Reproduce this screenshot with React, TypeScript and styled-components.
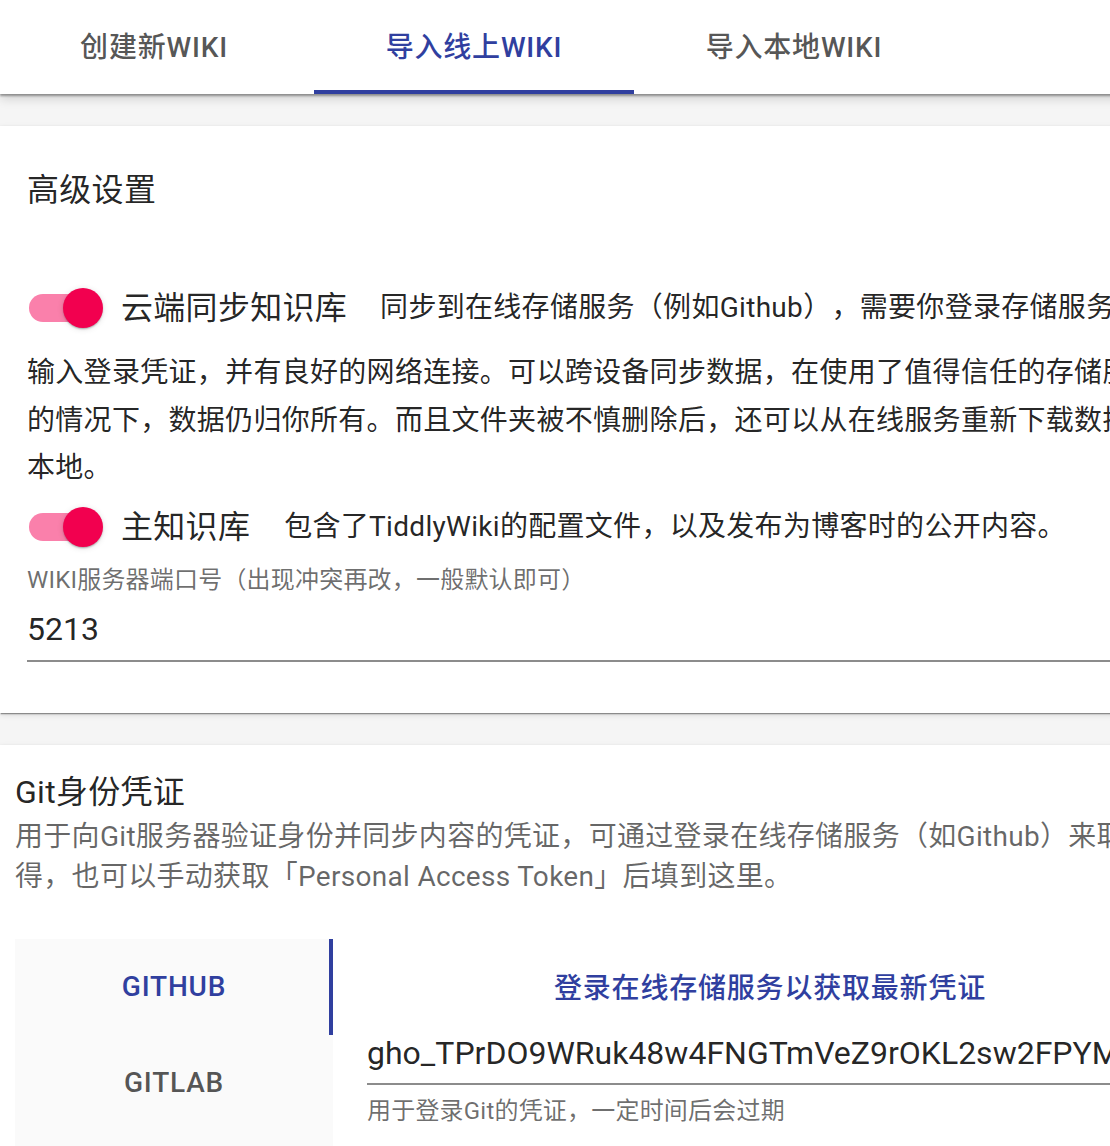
import React from "react";
import styled, { createGlobalStyle } from "styled-components";

const PRIMARY = "#303f9f";
const FONT = `Roboto, "Noto Sans CJK SC", "Noto Sans", sans-serif`;

const GlobalStyle = createGlobalStyle`
  html, body {
    margin: 0;
    padding: 0;
    background: #f5f5f5;
    overflow: hidden;
  }
  body {
    font-family: ${FONT};
    -webkit-font-smoothing: antialiased;
    text-spacing-trim: space-all;
  }
`;

const Page = styled.div`
  width: 1230px;
  display: flex;
  flex-direction: column;
`;

const TabBar = styled.nav`
  height: 94px;
  background: #fff;
  display: flex;
  position: relative;
  z-index: 2;
  box-shadow: 0 2px 2px rgba(0, 0, 0, 0.35), 0 5px 10px rgba(0, 0, 0, 0.14);
`;

const TabList = styled.div`
  display: flex;
  margin-left: -6px;
  height: 100%;
`;

const Tab = styled.div<{ $active?: boolean }>`
  width: 320px;
  box-sizing: border-box;
  display: flex;
  align-items: center;
  justify-content: center;
  font-size: 28px;
  font-weight: 500;
  letter-spacing: 0.8px;
  color: ${(p) => (p.$active ? PRIMARY : "rgba(0,0,0,0.68)")};
  border-bottom: 4px solid ${(p) => (p.$active ? PRIMARY : "transparent")};
`;

const Content = styled.main`
  display: flex;
  flex-direction: column;
  gap: 32px;
  padding-top: 32px;
`;

const Card = styled.section<{ $pad: string }>`
  background: #fff;
  padding: ${(p) => p.$pad};
  box-shadow: 0 2px 1px -1px rgba(0, 0, 0, 0.3), 0 1px 2px rgba(0, 0, 0, 0.18),
    0 2px 6px rgba(0, 0, 0, 0.1);
  display: flex;
  flex-direction: column;
`;

const Heading = styled.h2<{ $mb?: number }>`
  margin: 0 0 ${(p) => p.$mb ?? 0}px;
  font-size: 32px;
  line-height: 48px;
  font-weight: 400;
  letter-spacing: 0.3px;
  color: rgba(0, 0, 0, 0.87);
`;

const SwitchRow = styled.div<{ $mt?: number }>`
  display: flex;
  align-items: center;
  margin-left: -22px;
  margin-top: ${(p) => p.$mt ?? 0}px;
  white-space: nowrap;
`;

const SwitchRoot = styled.span`
  width: 116px;
  height: 76px;
  box-sizing: border-box;
  padding: 24px;
  display: inline-flex;
  align-items: center;
  flex-shrink: 0;
`;

const Track = styled.span`
  width: 68px;
  height: 28px;
  border-radius: 14px;
  background: #fa80ab;
  display: flex;
  align-items: center;
  justify-content: flex-end;
`;

const Thumb = styled.span`
  width: 40px;
  height: 40px;
  border-radius: 50%;
  background: #f2004f;
  margin-right: -6px;
  flex-shrink: 0;
  box-shadow: 0 2px 2px -1px rgba(0, 0, 0, 0.2), 0 1px 2px rgba(0, 0, 0, 0.14),
    0 1px 6px rgba(0, 0, 0, 0.12);
`;

const SwitchTitle = styled.span`
  font-size: 32px;
  line-height: 48px;
  letter-spacing: 0.3px;
  color: rgba(0, 0, 0, 0.87);
`;

const SwitchDesc = styled.span<{ $gap: number }>`
  margin-left: ${(p) => p.$gap}px;
  font-size: 28px;
  line-height: 48px;
  letter-spacing: 0.3px;
  color: rgba(0, 0, 0, 0.87);
`;

const DescLines = styled.p`
  margin: 3px 0 -3px;
  font-size: 28px;
  line-height: 47.6px;
  letter-spacing: 0.3px;
  color: rgba(0, 0, 0, 0.87);
  white-space: nowrap;
`;

const FieldLabel = styled.label`
  display: block;
  margin-top: 2px;
  font-size: 24px;
  line-height: 27px;
  letter-spacing: 0.2px;
  color: rgba(0, 0, 0, 0.58);
  white-space: nowrap;
`;

const InputLine = styled.div<{ $pt: number; $pb: number }>`
  font-size: 32px;
  line-height: 38px;
  padding: ${(p) => p.$pt}px 0 ${(p) => p.$pb}px;
  border-bottom: 2px solid rgba(0, 0, 0, 0.45);
  color: rgba(0, 0, 0, 0.87);
  white-space: nowrap;
  overflow: hidden;
`;

const GrayText = styled.p`
  margin: 0;
  font-size: 28px;
  line-height: 40px;
  letter-spacing: 0.3px;
  color: rgba(0, 0, 0, 0.6);
  white-space: nowrap;
`;

const VTabsArea = styled.div`
  display: flex;
  margin-top: 42px;
  min-height: 215px;
`;

const VTabList = styled.div`
  width: 318px;
  flex-shrink: 0;
  background: #fafafa;
  display: flex;
  flex-direction: column;
`;

const VTab = styled.div<{ $active?: boolean }>`
  height: 96px;
  display: flex;
  align-items: center;
  justify-content: center;
  font-size: 28px;
  font-weight: 500;
  letter-spacing: 0.8px;
  color: ${(p) => (p.$active ? PRIMARY : "rgba(0,0,0,0.68)")};
  box-shadow: ${(p) => (p.$active ? `inset -4px 0 0 ${PRIMARY}` : "none")};
`;

const Panel = styled.div`
  width: 874px;
  box-sizing: border-box;
  padding: 10px 34px 0;
  display: flex;
  flex-direction: column;
`;

const TextButton = styled.button`
  height: 74px;
  width: 100%;
  border: none;
  background: none;
  font-family: ${FONT};
  font-size: 28px;
  font-weight: 500;
  letter-spacing: 0.8px;
  color: ${PRIMARY};
  cursor: pointer;
  padding: 0;
`;

const Helper = styled.div`
  margin-top: 13px;
  font-size: 24px;
  line-height: 26px;
  letter-spacing: 0.2px;
  color: rgba(0, 0, 0, 0.58);
  white-space: nowrap;
`;

function Switch() {
  return (
    <SwitchRoot>
      <Track>
        <Thumb />
      </Track>
    </SwitchRoot>
  );
}

export default function App() {
  return (
    <>
      <GlobalStyle />
      <Page>
        <TabBar>
          <TabList>
            <Tab>创建新WIKI</Tab>
            <Tab $active>导入线上WIKI</Tab>
            <Tab>导入本地WIKI</Tab>
          </TabList>
        </TabBar>
        <Content>
          <Card $pad="40px 0 51px 27px">
            <Heading>高级设置</Heading>
            <SwitchRow $mt={56}>
              <Switch />
              <SwitchTitle>云端同步知识库</SwitchTitle>
              <SwitchDesc $gap={33}>
                同步到在线存储服务（例如Github），需要你登录存储服务或
              </SwitchDesc>
            </SwitchRow>
            <DescLines>
              输入登录凭证，并有良好的网络连接。可以跨设备同步数据，在使用了值得信任的存储服务
              <br />
              的情况下，数据仍归你所有。而且文件夹被不慎删除后，还可以从在线服务重新下载数据到
              <br />
              本地。
            </DescLines>
            <SwitchRow>
              <Switch />
              <SwitchTitle>主知识库</SwitchTitle>
              <SwitchDesc $gap={34}>
                包含了TiddlyWiki的配置文件，以及发布为博客时的公开内容。
              </SwitchDesc>
            </SwitchRow>
            <FieldLabel>WIKI服务器端口号（出现冲突再改，一般默认即可）</FieldLabel>
            <InputLine $pt={16} $pb={12}>5213</InputLine>
          </Card>
          <Card $pad="23px 0 0 15px">
            <Heading $mb={1}>Git身份凭证</Heading>
            <GrayText>
              用于向Git服务器验证身份并同步内容的凭证，可通过登录在线存储服务（如Github）来取
              <br />
              得，也可以手动获取「Personal Access Token」后填到这里。
            </GrayText>
            <VTabsArea>
              <VTabList>
                <VTab $active>GITHUB</VTab>
                <VTab>GITLAB</VTab>
              </VTabList>
              <Panel>
                <TextButton>登录在线存储服务以获取最新凭证</TextButton>
                <InputLine $pt={11} $pb={11}>
                  gho_TPrDO9WRuk48w4FNGTmVeZ9rOKL2sw2FPYM1dQx7
                </InputLine>
                <Helper>用于登录Git的凭证，一定时间后会过期</Helper>
              </Panel>
            </VTabsArea>
          </Card>
        </Content>
      </Page>
    </>
  );
}
